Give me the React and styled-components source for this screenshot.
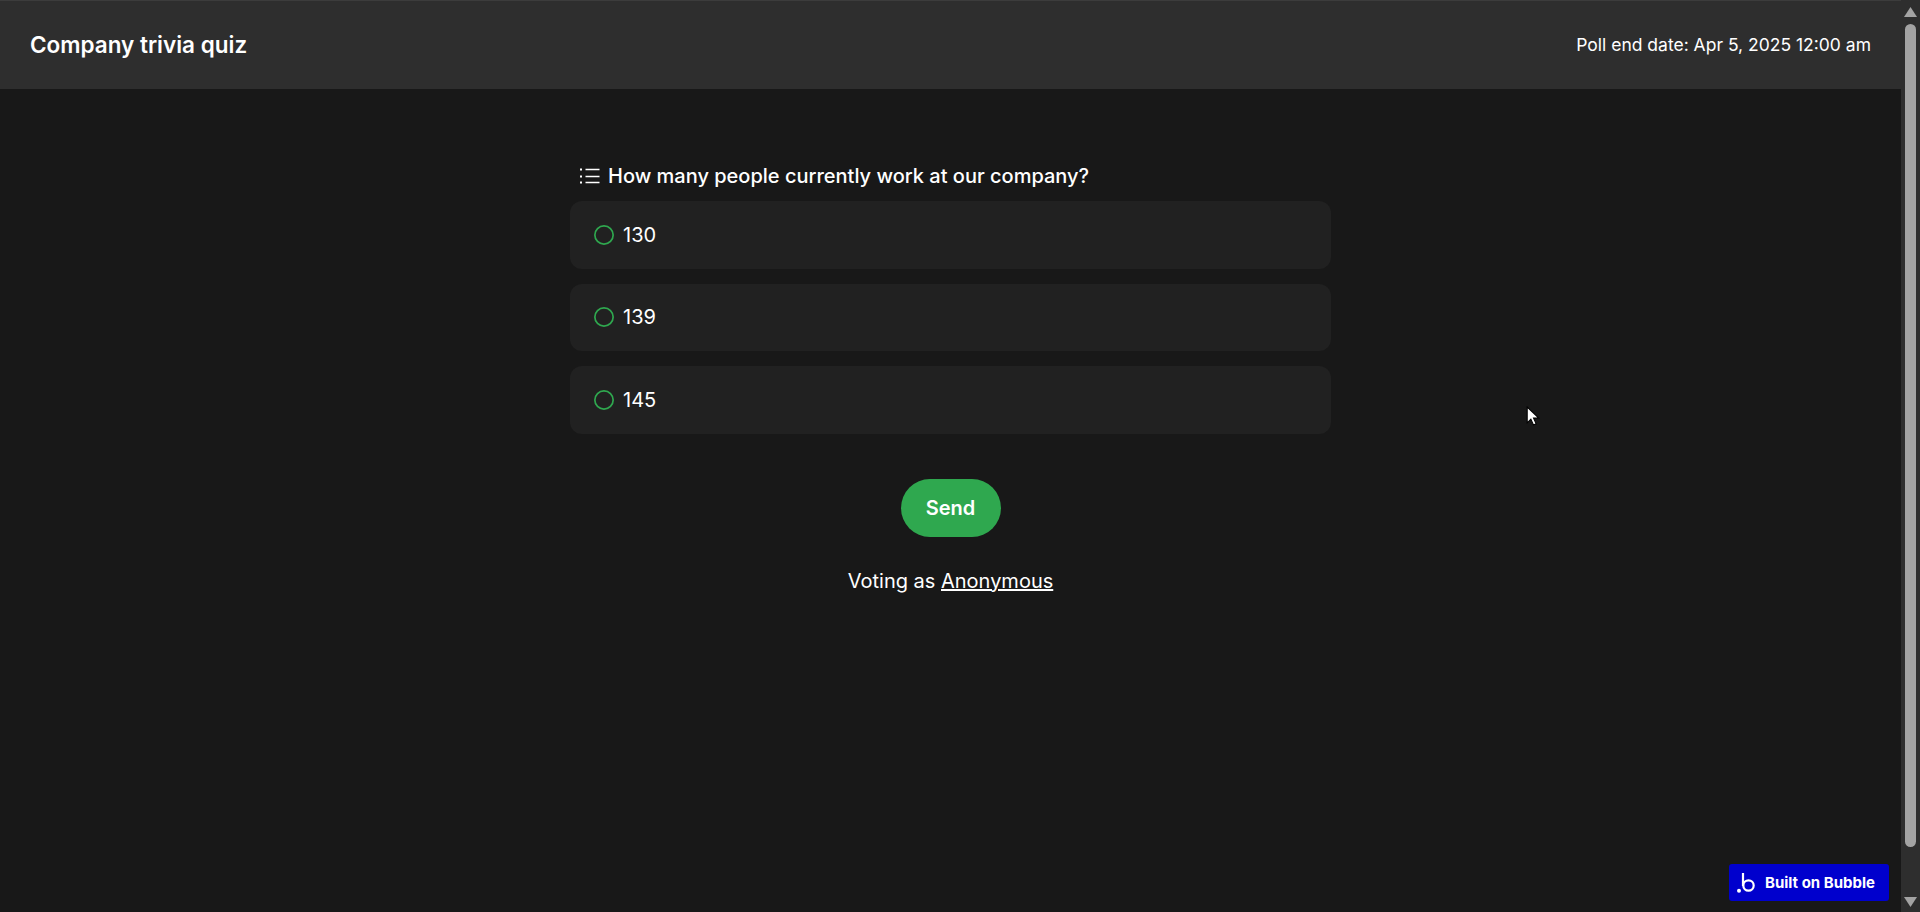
import React from "react"
import styled, { createGlobalStyle } from 'styled-components'

const GlobalStyle = createGlobalStyle`
html, body {
  margin: 0;
  padding: 0;
  height: 100%;
  overflow: hidden;
  background: #181818;
  font-family: Inter, "Noto Sans", sans-serif;
}
`
const Page = styled.div`
position: relative;
width: 1920px;
height: 912px;
display: flex;
flex-direction: row;
overflow: hidden;
background: #181818;
`
const Main = styled.div`
flex: 1;
display: flex;
flex-direction: column;
align-items: center;
`
const Header = styled.div`
align-self: stretch;
height: 89px;
box-sizing: border-box;
border-top: 1px solid #3c3c3c;
padding: 0 30px 2px;
background: #2e2e2e;
color: #fff;
display: flex;
align-items: center;
justify-content: space-between;
`
const Title = styled.div`
font-size: 22.5px;
font-weight: 600;
`
const EndDate = styled.div`
font-size: 17.5px;
`
const Poll = styled.div`
width: 761px;
margin-top: 73px;
display: flex;
flex-direction: column;
align-items: center;
color: #fff;
`
const Question = styled.div`
align-self: stretch;
height: 39px;
box-sizing: border-box;
padding: 0 0 11px 10px;
display: flex;
align-items: center;
gap: 8px;
font-size: 20px;
font-weight: 500;
`
const Options = styled.div`
align-self: stretch;
display: flex;
flex-direction: column;
gap: 15px;
`
const Option = styled.div`
height: 67.5px;
padding-left: 24px;
border-radius: 12px;
background: #212121;
display: flex;
align-items: center;
gap: 9px;
font-size: 20px;
`
const Radio = styled.svg`
width: 20px;
height: 20px;
fill: none;
stroke: #2fa84f;
stroke-width: 1.7;
`
const SendButton = styled.button`
width: 100px;
height: 58px;
margin-top: 45px;
border: none;
border-radius: 29px;
background: #2fa84f;
color: #fff;
font-family: inherit;
font-size: 20px;
font-weight: 600;
`
const Voting = styled.div`
margin-top: 32px;
font-size: 20px;
`
const Link = styled.a`
color: #fff;
text-decoration: underline;
`
const Scrollbar = styled.div`
width: 19px;
background: #2e2e2e;
display: flex;
flex-direction: column;
align-items: center;
`
const ScrollArrow = styled.svg`
width: 13px;
height: 10px;
flex: none;
margin: ${({ $down }) => ($down ? "auto 0 5px" : "7px 0")};
fill: #a3a3a3;
`
const ScrollThumb = styled.div`
width: 11px;
height: 823px;
flex: none;
border-radius: 6px;
background: #a3a3a3;
`
const Badge = styled.div`
position: absolute;
right: 31px;
bottom: 11px;
width: 160px;
height: 37px;
box-sizing: border-box;
padding-left: 8px;
border-radius: 3px;
background: #0000cd;
color: #fff;
display: flex;
align-items: center;
gap: 10px;
font-size: 15px;
font-weight: 700;
`
const Cursor = styled.svg`
position: absolute;
left: 1526px;
top: 406px;
width: 15px;
height: 21px;
`

const options = ["130", "139", "145"]

export default function App() {
  return (
    <Page>
      <GlobalStyle />
      <Main>
        <Header>
          <Title>Company trivia quiz</Title>
          <EndDate>Poll end date: Apr 5, 2025 12:00 am</EndDate>
        </Header>
        <Poll>
          <Question>
            <svg width="20" height="16" viewBox="0 0 20 16" fill="none" stroke="#fff" strokeWidth="1.4">
              <path d="M5.5 1.5H19.5M5.5 8.5H19.5M5.5 14.5H19.5" />
              <path d="M0 1.5H2M0 8.5H2M0 14.5H2" strokeWidth="1.8" />
            </svg>
            How many people currently work at our company?
          </Question>
          <Options>
            {options.map((value) => (
              <Option key={value}>
                <Radio viewBox="0 0 20 20"><circle cx="10" cy="10" r="9.15" /></Radio>
                {value}
              </Option>
            ))}
          </Options>
          <SendButton>Send</SendButton>
          <Voting>Voting as <Link>Anonymous</Link></Voting>
        </Poll>
      </Main>
      <Scrollbar>
        <ScrollArrow viewBox="0 0 13 10"><path d="M6.5 0L13 10H0Z" /></ScrollArrow>
        <ScrollThumb />
        <ScrollArrow $down viewBox="0 0 13 10"><path d="M0 0H13L6.5 10Z" /></ScrollArrow>
      </Scrollbar>
      <Badge>
        <svg width="18" height="20" viewBox="0 0 18 20" fill="none" stroke="#fff" strokeWidth="2.2">
          <path d="M6 0V13" />
          <circle cx="11.5" cy="12.5" r="5.2" />
          <circle cx="2" cy="17.8" r="2" fill="#fff" stroke="none" />
        </svg>
        Built on Bubble
      </Badge>
      <Cursor viewBox="0 0 14 20">
        <path d="M1 1V16L4.5 12.5L7 18L9.5 17L7 11.5H12Z" fill="#fff" stroke="#000" strokeWidth="1" />
      </Cursor>
    </Page>
  )
}
